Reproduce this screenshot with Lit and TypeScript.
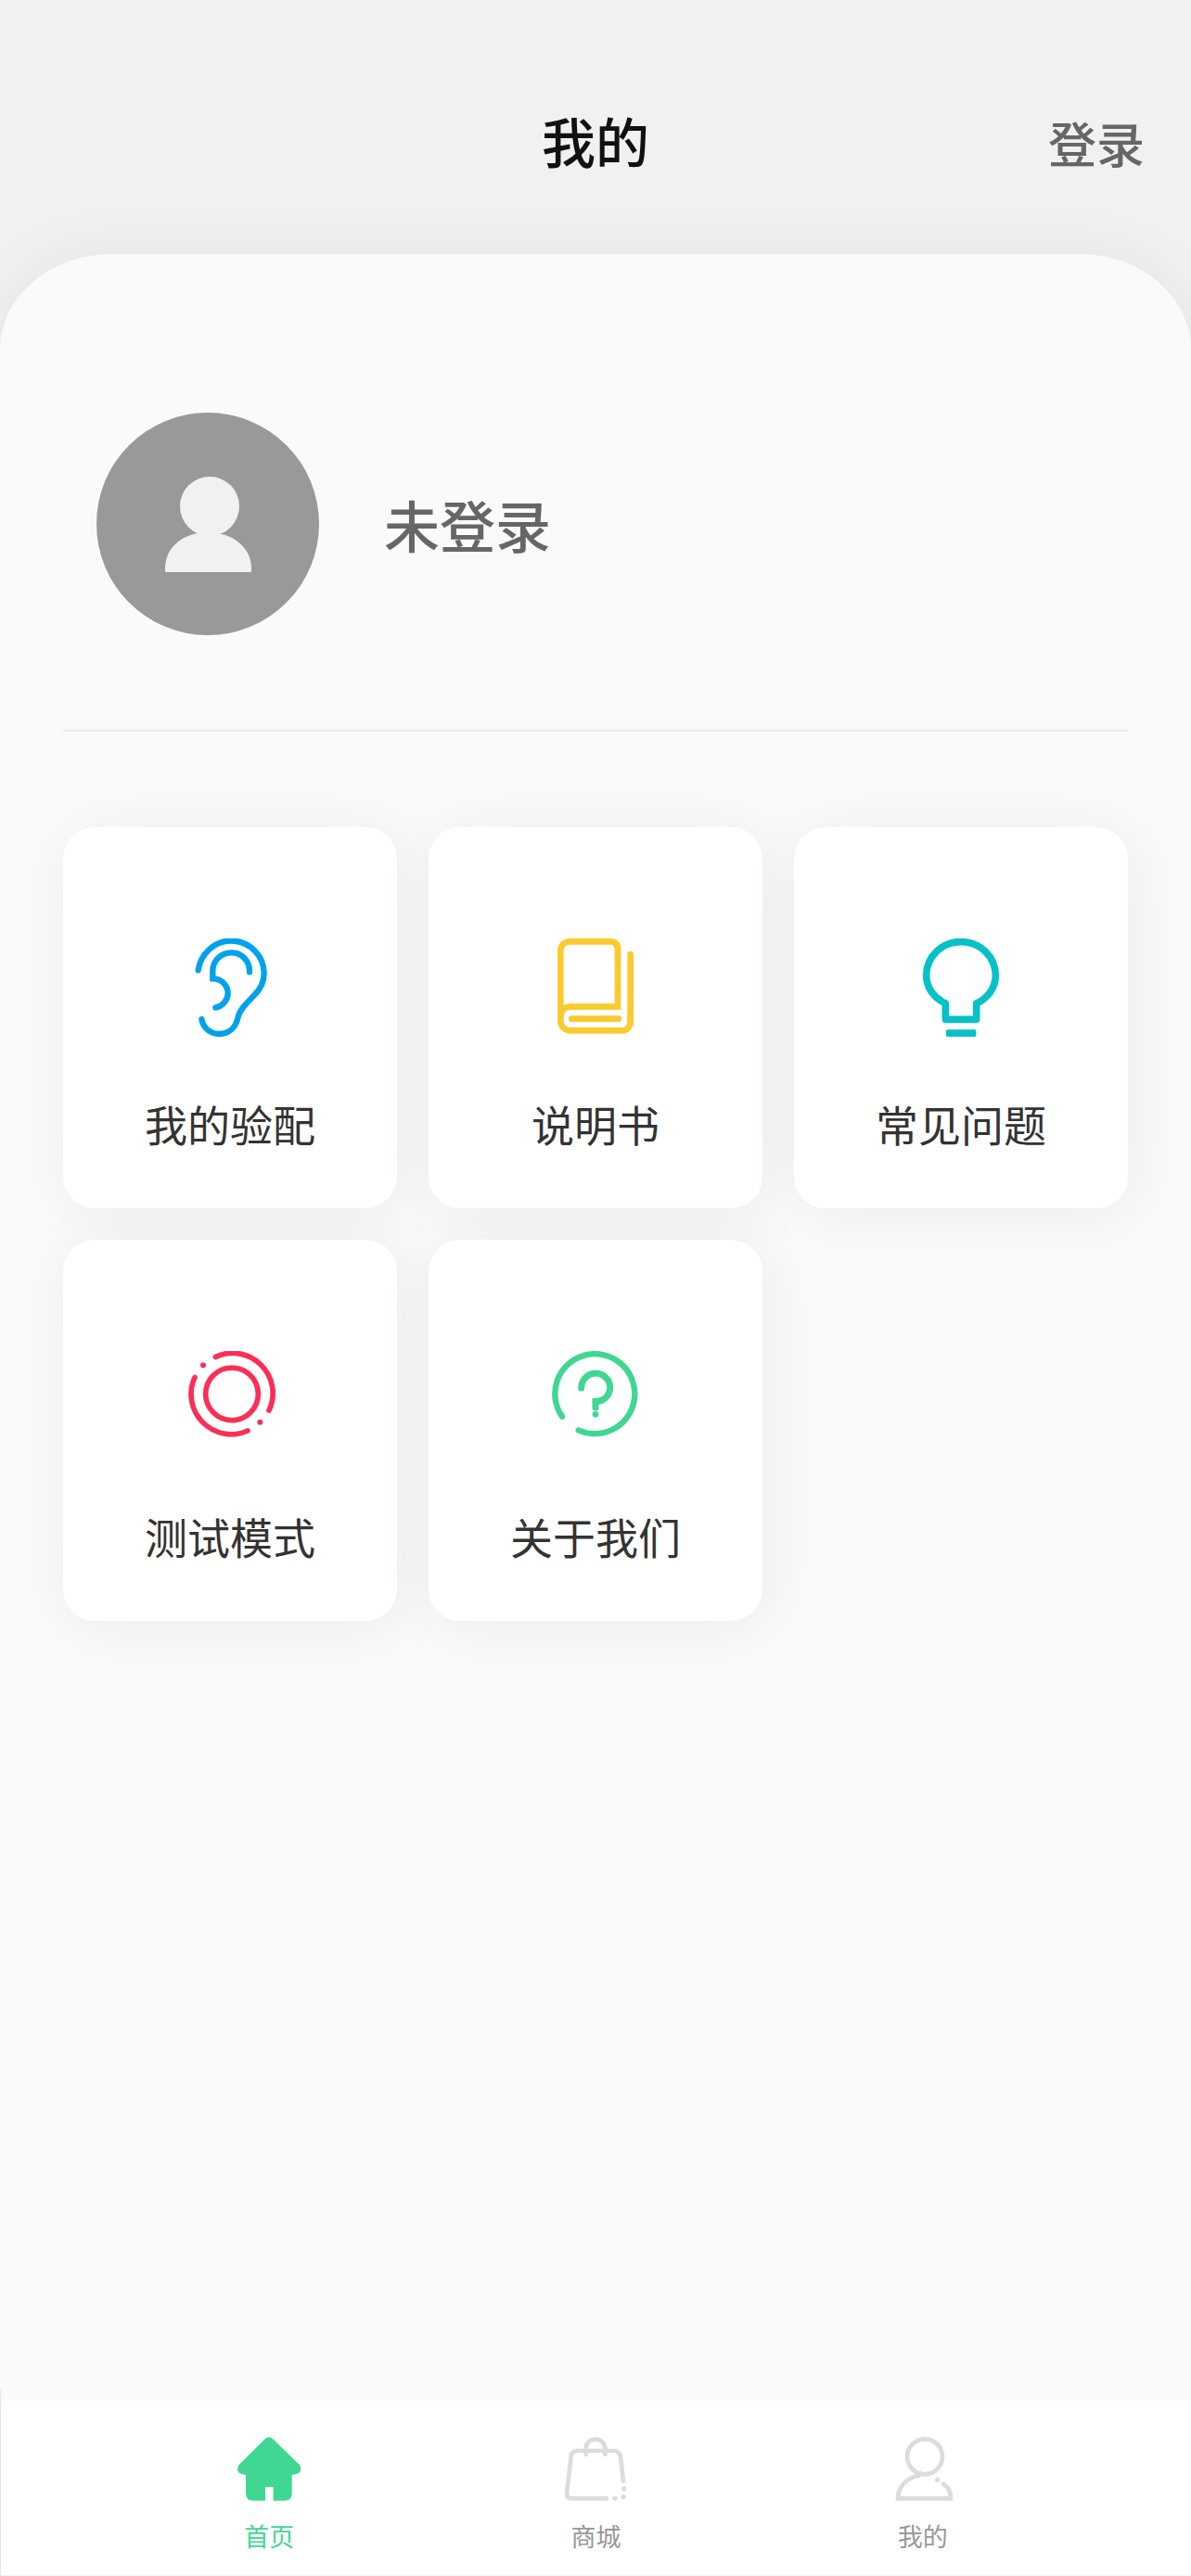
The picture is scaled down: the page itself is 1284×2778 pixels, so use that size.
import { LitElement, html, svg, css } from "lit";
import type { SVGTemplateResult } from "lit";
import { customElement, property, state } from "lit/decorators.js";
import { classMap } from "lit/directives/class-map.js";

interface Entry {
  label: string;
  color: string;
  viewBox: string;
  icon: SVGTemplateResult;
}

interface Tab {
  id: string;
  label: string;
  viewBox: string;
  icon: SVGTemplateResult;
}

const ENTRIES: Entry[] = [
  {
    label: "我的验配",
    color: "#00a2ec",
    viewBox: "408 396 312 324",
    icon: svg`<g stroke-width="19" stroke-linecap="round">
      <path d="M461 499C469 445 514 404 567 404C627 404 674 451 674 509C674 538 662 560 642 580C618 606 596 624 590 650C583 685 560 705 529 705C500 705 477 686 472 657"/>
      <path d="M627 505V502C627 468 601 442 568 442C535 442 508 468 508 502V526C535 526 557 547 557 573C557 596 539 616 517 620"/>
    </g>`,
  },
  {
    label: "说明书",
    color: "#fbca2f",
    viewBox: "420 396 312 324",
    icon: svg`<g stroke-width="20" stroke-linecap="round">
      <path stroke-linecap="butt" d="M463 652C463 630 476 617 495 617H648V433C648 415 640 406 625 406H495C475 406 463 419 463 437V660C463 681 476 694 495 694H662C679 694 689 681 689 662V640"/>
      <path d="M689 660V447M499 656H651"/>
    </g>`,
  },
  {
    label: "常见问题",
    color: "#06c1c7",
    viewBox: "432 396 312 324",
    icon: svg`<path stroke-width="23" stroke-linejoin="round" d="M538 606C501 590 476 555 476 516C476 455 526 407 588 407C650 407 700 455 700 516C700 555 675 590 638 606V658H538Z"/>
      <rect x="540" y="691" width="97" height="23" rx="5" fill="currentColor" stroke="none"/>`,
  },
  {
    label: "测试模式",
    color: "#fb2e57",
    viewBox: "408 411 312 324",
    icon: svg`<g stroke-width="17" stroke-linecap="round">
      <circle cx="570" cy="550" r="85"/>
      <path d="M517 430A130 130 0 0 1 690 603M450 496A130 130 0 0 0 621 669"/>
    </g>
    <g fill="currentColor" stroke="none">
      <circle cx="477" cy="457" r="9"/>
      <circle cx="661" cy="641" r="9"/>
    </g>`,
  },
  {
    label: "关于我们",
    color: "#3fd791",
    viewBox: "420 411 312 324",
    icon: svg`<g stroke-width="19" stroke-linecap="round">
      <path d="M468 623A129 129 0 1 1 521 667"/>
      <path stroke-width="21" d="M530 531C530 504 551 483 576 483C602 483 623 503 623 529C623 555 602 574 576 574V594"/>
    </g>
    <circle cx="576" cy="616" r="10" fill="currentColor" stroke="none"/>`,
  },
];

const TABS: Tab[] = [
  {
    id: "home",
    label: "首页",
    viewBox: "774 205 204 207",
    icon: svg`<path fill="currentColor" stroke="none" d="M864 211Q876 201 888 211L975 296Q980 303 979 311Q977 321 967 324L950 328V388Q950 411 927 411H890V367H864V411H825Q801 411 801 388V328L786 324Q774 321 774 309Q774 301 779 295Z"/>`,
  },
  {
    id: "shop",
    label: "商城",
    viewBox: "145 85 204 207",
    icon: svg`<g stroke-width="14" stroke-linecap="round">
      <path d="M337 228L328 150Q325 130 306 130H187Q170 130 168 150L154 268Q153 284 170 284H283"/>
      <path d="M216 142V122C216 105 230 93 247 93C264 93 278 105 278 122V142"/>
    </g>
    <g fill="currentColor" stroke="none">
      <circle cx="310" cy="284" r="8"/>
      <circle cx="337" cy="279" r="8"/>
      <circle cx="339" cy="253" r="8"/>
    </g>`,
  },
  {
    id: "mine",
    label: "我的",
    viewBox: "1206 85 204 207",
    icon: svg`<g stroke-width="14">
      <circle cx="1314" cy="149" r="57"/>
      <path d="M1300 210C1257 214 1227 248 1227 284H1398C1398 262 1389 246 1374 236"/>
    </g>
    <g fill="currentColor" stroke="none">
      <circle cx="1355" cy="224" r="8"/>
      <circle cx="1374" cy="237" r="7"/>
    </g>`,
  },
];

@customElement("menu-card")
class MenuCard extends LitElement {
  @property({ attribute: false }) entry!: Entry;

  static styles = css`
    :host {
      display: block;
    }
    .card {
      display: flex;
      flex-direction: column;
      align-items: center;
      gap: 58px;
      box-sizing: border-box;
      width: 100%;
      padding: 120px 0 59px;
      border: 0;
      border-radius: 34px;
      background: #fff;
      box-shadow: 6px 6px 68px rgba(0, 0, 0, 0.06);
      color: #333;
      font: inherit;
      font-size: 46px;
      line-height: 66px;
      cursor: pointer;
    }
    .icon {
      display: block;
      width: 104px;
      height: 108px;
      fill: none;
      stroke: currentColor;
    }
  `;

  render() {
    const { label, color, viewBox, icon } = this.entry;
    return html`<button class="card" type="button">
      <svg class="icon" style="color:${color}" viewBox=${viewBox} aria-hidden="true">${icon}</svg>
      <span>${label}</span>
    </button>`;
  }
}

@customElement("tab-bar")
class TabBar extends LitElement {
  @state() private active = "home";

  static styles = css`
    :host {
      display: block;
    }
    .bar {
      display: grid;
      grid-template-columns: repeat(3, 1fr);
      padding: 12px 113px 0;
      border-left: 1px solid #e6e6e6;
      border-bottom: 1px solid #f3f3f3;
      background: linear-gradient(#fafafa 12px, #fff 12px);
    }
    .tab {
      display: flex;
      flex-direction: column;
      align-items: center;
      gap: 18px;
      padding: 39px 0 22px;
      color: #999;
      font-size: 27px;
      line-height: 40px;
      text-decoration: none;
    }
    .icon {
      display: block;
      width: 68px;
      height: 69px;
      color: #dcdcdc;
      fill: none;
      stroke: currentColor;
    }
    .active,
    .active .icon {
      color: #3fd791;
    }
  `;

  render() {
    return html`<nav class="bar">
      ${TABS.map(
        (tab) => html`<a
          class=${classMap({ tab: true, active: tab.id === this.active })}
          href="#${tab.id}"
          @click=${() => (this.active = tab.id)}
        >
          <svg class="icon" viewBox=${tab.viewBox} aria-hidden="true">${tab.icon}</svg>
          <span>${tab.label}</span>
        </a>`,
      )}
    </nav>`;
  }
}

@customElement("app-root")
class AppRoot extends LitElement {
  static styles = css`
    :host {
      display: flex;
      flex-direction: column;
      min-height: 100vh;
      background: #f1f1f4;
      font-family: "Noto Sans CJK SC", "Noto Sans", sans-serif;
    }
    .header {
      display: grid;
      grid-template-columns: 1fr auto 1fr;
      align-items: baseline;
      padding: 106px 50px 78px;
    }
    .title {
      grid-column: 2;
      margin: 0;
      color: #111;
      font-size: 58px;
      font-weight: 500;
      line-height: 90px;
    }
    .login {
      justify-self: end;
      padding: 0;
      border: 0;
      background: none;
      color: #666;
      font: inherit;
      font-size: 52px;
      font-weight: 500;
      line-height: 76px;
      cursor: pointer;
    }
    .panel {
      flex: 1;
      padding: 171px 68px 68px;
      border-radius: 120px 120px 0 0 / 103px 103px 0 0;
      background: #fafafa;
      box-shadow: 0 0 68px rgba(0, 0, 0, 0.06);
    }
    .profile {
      display: flex;
      align-items: center;
      gap: 70px;
      padding: 0 36px 102px;
      border-bottom: 2px solid #ebebeb;
    }
    .avatar {
      display: block;
      width: 240px;
      height: 240px;
    }
    .name {
      margin: 0;
      color: #666;
      font-size: 60px;
      font-weight: 500;
      line-height: 90px;
    }
    .menu {
      display: grid;
      grid-template-columns: repeat(3, 1fr);
      gap: 34px;
      margin-top: 103px;
    }
    .tabs {
      position: relative;
    }
  `;

  render() {
    return html`
      <header class="header">
        <h1 class="title">我的</h1>
        <button class="login" type="button">登录</button>
      </header>
      <main class="panel">
        <section class="profile">
          <svg class="avatar" viewBox="0 0 240 240" aria-hidden="true">
            <circle cx="120" cy="120" r="120" fill="#999" />
            <g fill="#f1f1f4">
              <circle cx="122" cy="101" r="32" />
              <path d="M74 171V168C74 144 95 129 120 129C145 129 167 144 167 168V171Q167 172 166 172H75Q74 172 74 171Z" />
            </g>
          </svg>
          <p class="name">未登录</p>
        </section>
        <section class="menu">
          ${ENTRIES.map((entry) => html`<menu-card .entry=${entry}></menu-card>`)}
        </section>
      </main>
      <tab-bar class="tabs"></tab-bar>
    `;
  }
}
